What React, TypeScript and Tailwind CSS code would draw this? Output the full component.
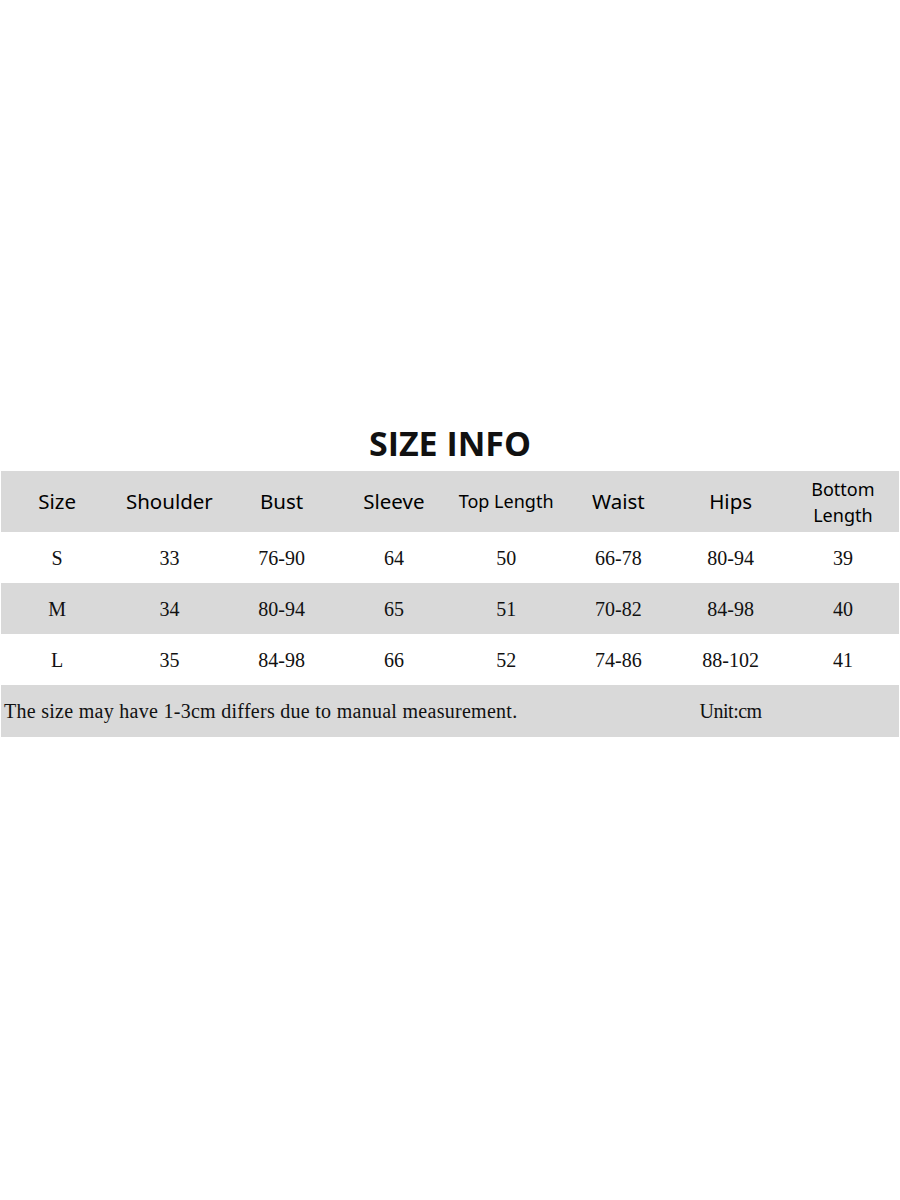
const headers = ['Size', 'Shoulder', 'Bust', 'Sleeve', 'Top Length', 'Waist', 'Hips', 'Bottom Length']

const rows = [
  ['S', '33', '76-90', '64', '50', '66-78', '80-94', '39'],
  ['M', '34', '80-94', '65', '51', '70-82', '84-98', '40'],
  ['L', '35', '84-98', '66', '52', '74-86', '88-102', '41'],
]

export default function App() {
  return (
    <div className="w-[900px] h-[1200px] bg-white text-[#111] pt-[421px]">
      <h1 className="text-center text-[34px] leading-[44px] font-bold font-['Open_Sans',sans-serif] mb-[6px]">
        SIZE INFO
      </h1>

      <div className="px-[1px]">
        <div className="grid grid-cols-8 h-[61px] bg-[#d9d9d9] items-center font-['Noto_Sans',sans-serif] text-[20.5px] text-black">
          {headers.map(h => (
            <div
              key={h}
              className={`text-center ${h === 'Top Length' ? 'text-[18px]' : ''} ${h === 'Bottom Length' ? 'text-[18px] leading-[26px] px-6' : ''}`}
            >
              {h}
            </div>
          ))}
        </div>

        {rows.map((r, i) => (
          <div
            key={r[0]}
            className={`grid grid-cols-8 h-[51px] items-center font-['Liberation_Serif',serif] text-[20px] ${
              i === 1 ? 'bg-[#d9d9d9]' : 'bg-white'
            }`}
          >
            {r.map((c, j) => (
              <div key={j} className="text-center">{c}</div>
            ))}
          </div>
        ))}

        <div className="grid grid-cols-8 h-[52px] items-center bg-[#d9d9d9] font-['Liberation_Serif',serif] text-[20px]">
          <div className="col-span-6 pl-[3px] tracking-[0.28px] whitespace-nowrap">
            The size may have 1-3cm differs due to manual measurement.
          </div>
          <div className="text-center tracking-[-0.5px]">Unit:cm</div>
        </div>
      </div>
    </div>
  )
}
